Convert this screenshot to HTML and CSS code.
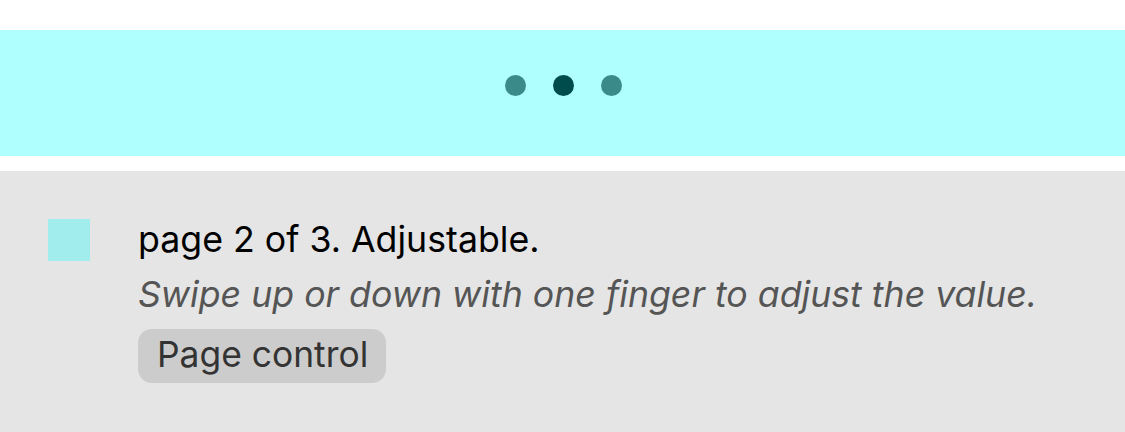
FILE: index.html
```html
<!DOCTYPE html>
<html>
<head>
<meta charset="utf-8">
<link rel="stylesheet" href="styles.css">
</head>
<body>
<div class="top-space"></div>
<div class="pager">
  <span class="dot"></span>
  <span class="dot active"></span>
  <span class="dot"></span>
</div>
<div class="gap"></div>
<div class="panel">
  <div class="swatch"></div>
  <div class="info">
    <div class="label">page 2 of 3. Adjustable.</div>
    <div class="hint">Swipe up or down with one finger to adjust the value.</div>
    <span class="badge">Page control</span>
  </div>
</div>
</body>
</html>
```
FILE: styles.css
```css
html, body {
  margin: 0;
  padding: 0;
  background: #ffffff;
}
body {
  width: 1125px;
  height: 432px;
  overflow: hidden;
  font-family: Inter, "Noto Sans", sans-serif;
}
.top-space {
  height: 30px;
}
.pager {
  height: 126px;
  background: #b0ffff;
  display: flex;
  justify-content: center;
  align-items: flex-start;
  gap: 27px;
  padding: 45px 0 0 1px;
  box-sizing: border-box;
}
.dot {
  width: 21px;
  height: 21px;
  border-radius: 50%;
  background: #3b8a8a;
}
.dot.active {
  background: #004c4c;
}
.gap {
  height: 15px;
}
.panel {
  height: 261px;
  background: #e5e5e5;
  display: flex;
  align-items: flex-start;
  padding: 48px 0 0 48px;
  box-sizing: border-box;
}
.swatch {
  width: 42px;
  height: 42px;
  background: #a1eded;
  flex: none;
}
.info {
  margin-left: 48px;
  display: flex;
  flex-direction: column;
  align-items: flex-start;
  margin-top: -4px;
}
.label {
  font-size: 35.7px;
  line-height: 48px;
  color: #000;
}
.hint {
  font-size: 35.7px;
  line-height: 48px;
  font-style: italic;
  color: #555555;
  margin-top: 7px;
}
.badge {
  margin-top: 11px;
  background: #cccccc;
  border-radius: 14px;
  padding: 0 18px 0 19px;
  height: 54px;
  line-height: 52px;
  font-size: 35.4px;
  color: #333;
}
```
